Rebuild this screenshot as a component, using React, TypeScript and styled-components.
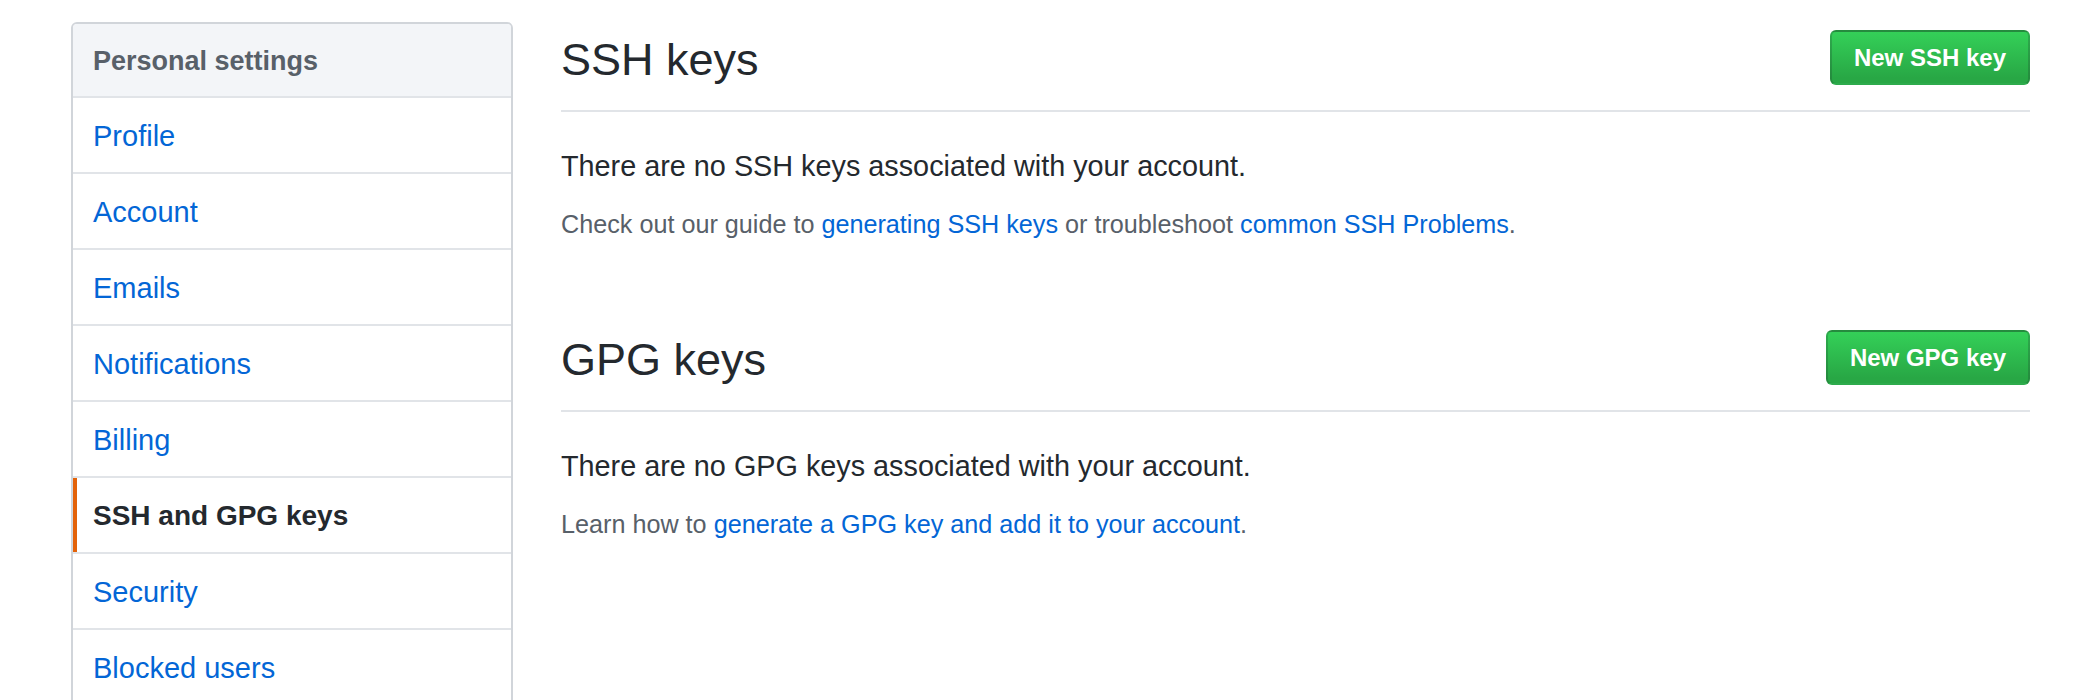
import React from 'react'
import styled, { createGlobalStyle } from 'styled-components'

const GlobalStyle = createGlobalStyle`
  html, body {
    margin: 0;
    padding: 0;
    background: #ffffff;
  }
  body {
    font-family: "Liberation Sans", Arial, sans-serif;
    color: #24292e;
  }
`

const Page = styled.div`
  display: flex;
  align-items: flex-start;
  gap: 48px;
  padding: 22px 44px 0 71px;
`

const Menu = styled.nav`
  flex: 0 0 442px;
  box-sizing: border-box;
  border: 2px solid #d1d5da;
  border-radius: 6px;
  overflow: hidden;
`

const MenuHeading = styled.div`
  padding: 16px 20px 14px;
  background: #f3f5f8;
  border-bottom: 2px solid #e1e4e8;
  font-size: 27px;
  line-height: 42px;
  font-weight: 700;
  color: #586069;
`

const MenuItem = styled.a<{ $selected?: boolean }>`
  display: block;
  position: relative;
  padding: 17px 20px 15px;
  font-size: ${(p) => (p.$selected ? '28px' : '29px')};
  line-height: 42px;
  text-decoration: none;
  color: ${(p) => (p.$selected ? '#24292e' : '#0366d6')};
  font-weight: ${(p) => (p.$selected ? 700 : 400)};
  border-bottom: 2px solid #e1e4e8;
  &:last-child {
    border-bottom: 0;
  }
  &::before {
    content: '';
    display: ${(p) => (p.$selected ? 'block' : 'none')};
    position: absolute;
    top: 0;
    bottom: 0;
    left: 0;
    width: 4px;
    background: #e36209;
  }
`

const Main = styled.main`
  flex: 1 1 auto;
  padding-top: 2px;
`

const Section = styled.section<{ $spacious?: boolean }>`
  margin-top: ${(p) => (p.$spacious ? '82px' : '0')};
`

const Subhead = styled.div`
  display: flex;
  align-items: flex-start;
  padding-bottom: 14px;
  border-bottom: 2px solid #e1e4e8;
`

const Heading = styled.h2`
  flex: 1 1 auto;
  margin: 0;
  font-size: 45px;
  line-height: 72px;
  font-weight: 400;
  color: #24292e;
`

const GreenButton = styled.button`
  margin-top: 6px;
  padding: 5px 22px;
  font-family: inherit;
  font-size: 24px;
  line-height: 41px;
  font-weight: 700;
  color: #ffffff;
  white-space: nowrap;
  background-image: linear-gradient(-180deg, #34d058 0%, #28a745 90%);
  border: 2px solid rgba(27, 31, 35, 0.2);
  border-radius: 6px;
  cursor: pointer;
`

const Blank = styled.p`
  margin: 33px 0 0;
  font-size: 28.8px;
  line-height: 42px;
  color: #24292e;
`

const Note = styled.p`
  margin: 19px 0 0;
  font-size: 25.2px;
  line-height: 36px;
  color: #586069;
`

const Link = styled.a`
  color: #0366d6;
  text-decoration: none;
`

const menu = [
  'Profile',
  'Account',
  'Emails',
  'Notifications',
  'Billing',
  'SSH and GPG keys',
  'Security',
  'Blocked users',
]

const App = () => {
  return (
    <>
      <GlobalStyle />
      <Page>
        <Menu>
          <MenuHeading>Personal settings</MenuHeading>
          {menu.map((item) => (
            <MenuItem key={item} href="#" $selected={item === 'SSH and GPG keys'}>
              {item}
            </MenuItem>
          ))}
        </Menu>
        <Main>
          <Section>
            <Subhead>
              <Heading>SSH keys</Heading>
              <GreenButton>New SSH key</GreenButton>
            </Subhead>
            <Blank>There are no SSH keys associated with your account.</Blank>
            <Note>
              Check out our guide to <Link href="#">generating SSH keys</Link> or troubleshoot{' '}
              <Link href="#">common SSH Problems</Link>.
            </Note>
          </Section>
          <Section $spacious>
            <Subhead>
              <Heading>GPG keys</Heading>
              <GreenButton>New GPG key</GreenButton>
            </Subhead>
            <Blank>There are no GPG keys associated with your account.</Blank>
            <Note>
              Learn how to <Link href="#">generate a GPG key and add it to your account</Link>.
            </Note>
          </Section>
        </Main>
      </Page>
    </>
  )
}

export default App
